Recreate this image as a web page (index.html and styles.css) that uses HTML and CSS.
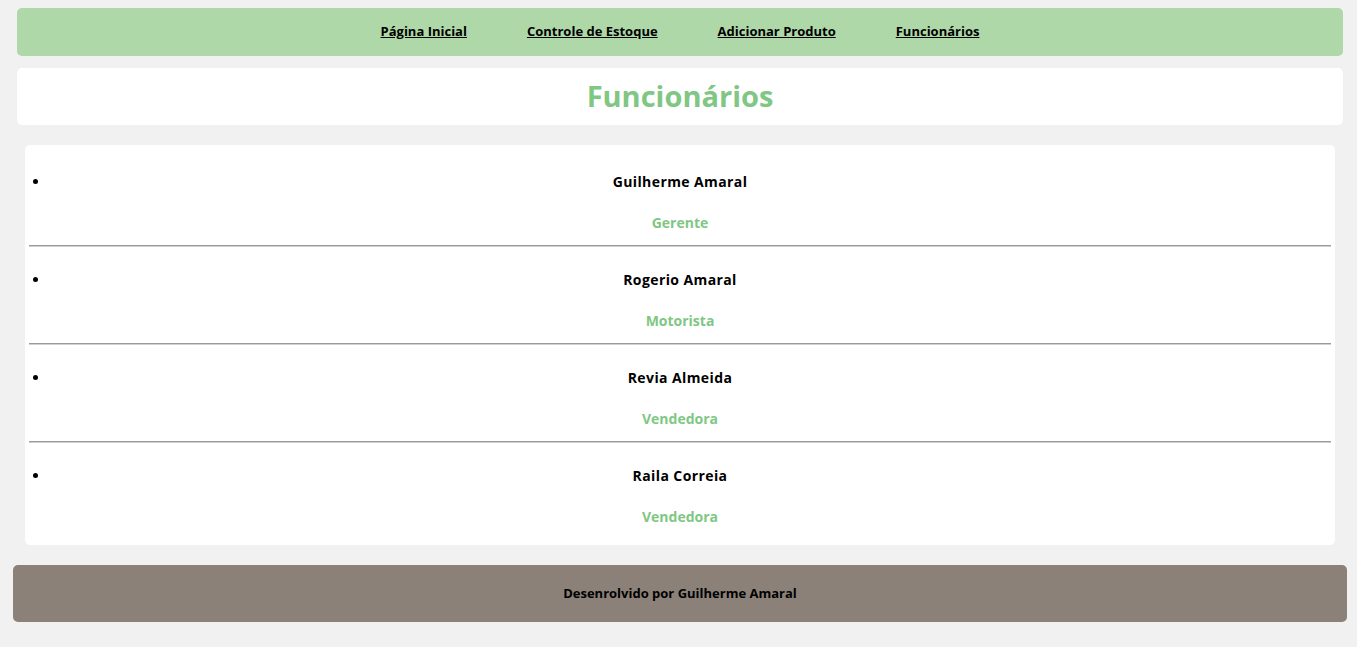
FILE: index.html
```html
<!DOCTYPE html>
<html lang="pt-BR">
<head>
<meta charset="utf-8">
<title>Funcionários</title>
<link rel="stylesheet" href="styles.css">
</head>
<body>
<nav class="topnav">
  <a href="#">Página Inicial</a>
  <a href="#">Controle de Estoque</a>
  <a href="#">Adicionar Produto</a>
  <a href="#">Funcionários</a>
</nav>
<header class="page-head">
  <h1>Funcionários</h1>
</header>
<main class="staff">
  <ul class="staff-list">
    <li class="staff-item">
      <div class="name-row"><span class="bullet"></span><span class="name">Guilherme Amaral</span></div>
      <div class="role">Gerente</div>
    </li>
    <li class="sep"></li>
    <li class="staff-item">
      <div class="name-row"><span class="bullet"></span><span class="name">Rogerio Amaral</span></div>
      <div class="role">Motorista</div>
    </li>
    <li class="sep"></li>
    <li class="staff-item">
      <div class="name-row"><span class="bullet"></span><span class="name">Revia Almeida</span></div>
      <div class="role">Vendedora</div>
    </li>
    <li class="sep"></li>
    <li class="staff-item">
      <div class="name-row"><span class="bullet"></span><span class="name">Raila Correia</span></div>
      <div class="role">Vendedora</div>
    </li>
  </ul>
</main>
<footer class="foot">Desenrolvido por Guilherme Amaral</footer>
</body>
</html>
```
FILE: styles.css
```css
html, body {
  margin: 0;
  background: #f1f1f1;
}
body {
  padding: 8px 0 25px;
  font-family: "Open Sans", "DejaVu Sans", sans-serif;
  color: #000;
}
.topnav {
  margin: 0 14px 0 17px;
  height: 48px;
  background: #aed8a7;
  border-radius: 5px;
  display: flex;
  justify-content: center;
  align-items: center;
  gap: 60px;
  padding-bottom: 2px;
  box-sizing: border-box;
}
.topnav a {
  color: #000;
  font-size: 13px;
  font-weight: bold;
  text-decoration: underline;
}
.page-head {
  margin: 12px 14px 0 17px;
  height: 57px;
  background: #fff;
  border-radius: 5px;
  display: flex;
  align-items: center;
  justify-content: center;
  padding-bottom: 2px;
  box-sizing: border-box;
}
.page-head h1 {
  margin: 0;
  font-size: 29px;
  font-weight: bold;
  color: #80c784;
}
.staff {
  margin: 20px 22px 0 25px;
  background: #fff;
  border-radius: 5px;
  padding: 4px 4px 6px;
}
.staff-list {
  list-style: none;
  margin: 0;
  padding: 0;
}
.staff-item {
  padding: 22px 0 12px;
}
.name-row {
  display: flex;
  align-items: center;
  height: 20px;
}
.bullet {
  width: 5px;
  height: 5px;
  border-radius: 50%;
  background: #000;
  margin-left: 4px;
  margin-right: -9px;
  flex: none;
}
.name {
  flex: 1;
  text-align: center;
  font-size: 14px;
  font-weight: bold;
  letter-spacing: 0.4px;
}
.role {
  margin-top: 22px;
  height: 20px;
  line-height: 20px;
  text-align: center;
  font-size: 14px;
  font-weight: bold;
  color: #80c784;
}
.sep {
  height: 0;
  border-top: 1px solid #9a9a9a;
  border-bottom: 1px solid #d0d0d0;
}
.foot {
  margin: 20px 10px 0 13px;
  height: 57px;
  background: #8b8178;
  border-radius: 5px;
  display: flex;
  align-items: center;
  justify-content: center;
  font-size: 13px;
  font-weight: bold;
  padding-bottom: 2px;
  box-sizing: border-box;
}
```
